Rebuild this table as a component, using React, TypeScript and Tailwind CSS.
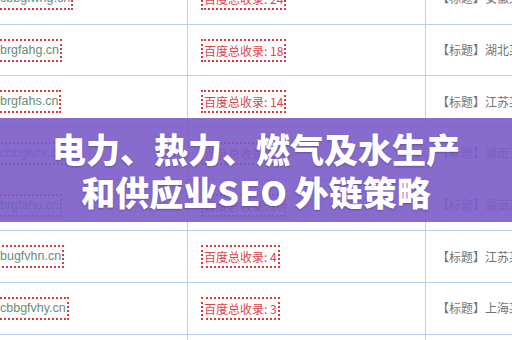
import React from 'react';

interface Row {
  domain: string;
  count: number;
  region: string;
}

const rows: Row[] = [
  { domain: 'cbbgfwhg.cn', count: 24, region: '安徽某某科技有限公司' },
  { domain: 'brgfahg.cn', count: 18, region: '湖北某某科技有限公司' },
  { domain: 'brgfahs.cn', count: 14, region: '江苏某某科技有限公司' },
  { domain: 'cbbgfvhr.cn', count: 12, region: '湖南某某科技有限公司' },
  { domain: 'brgfahu.cn', count: 10, region: '湖南某某科技有限公司' },
  { domain: 'bugfvhn.cn', count: 4, region: '江苏某某科技有限公司' },
  { domain: 'cbbgfvhy.cn', count: 3, region: '上海某某科技有限公司' },
  { domain: 'cbbgfvhz.cn', count: 2, region: '广东某某科技有限公司' },
];

export default function App() {
  return (
    <div className="relative w-[512px] h-[340px] overflow-hidden bg-white">
      {/* Table behind */}
      <div className="flex flex-col -mt-[27px]">
        {rows.map((row) => (
          <div
            key={row.domain}
            className="grid grid-cols-[188px_238px_1fr] h-[51.7px] shrink-0 border-b border-[#b7d1ec]"
          >
            <div className="flex items-center overflow-hidden border-r border-[#b7d1ec]">
              <span className="-ml-[3px] px-[1px] py-[2px] border-2 border-dotted border-[#d8383f] text-[12.5px] leading-[15px] text-[#6a8c74] font-['Liberation_Sans',sans-serif] whitespace-nowrap">
                {row.domain}
              </span>
            </div>
            <div className="flex items-center pl-[13px] border-r border-[#b7d1ec]">
              <span className="px-[1px] py-[2px] border-2 border-dotted border-[#d8383f] text-[12px] leading-[15px] text-[#dc4448] font-['Noto_Sans_CJK_SC',sans-serif] whitespace-nowrap">
                百度总收录: {row.count}
              </span>
            </div>
            <div className="flex items-center overflow-hidden pl-[11px]">
              <span className="text-[12px] text-[#737373] font-['Noto_Sans_CJK_SC',sans-serif] whitespace-nowrap">
                【标题】{row.region}
              </span>
            </div>
          </div>
        ))}
      </div>

      {/* Title band */}
      <div className="absolute left-0 right-0 top-[118px] h-[104px] bg-[#7a5cc9]/90 flex flex-col items-center justify-center">
        <div className="text-white text-[34px] leading-[43px] font-black font-['Noto_Sans_CJK_SC',sans-serif] text-center whitespace-nowrap [text-shadow:0_1px_2px_rgba(40,20,90,0.35)]">
          电力、热力、燃气及水生产
        </div>
        <div className="text-white text-[34px] leading-[43px] font-black font-['Noto_Sans_CJK_SC',sans-serif] text-center whitespace-nowrap [text-shadow:0_1px_2px_rgba(40,20,90,0.35)]">
          和供应业SEO 外链策略
        </div>
      </div>
    </div>
  );
}
